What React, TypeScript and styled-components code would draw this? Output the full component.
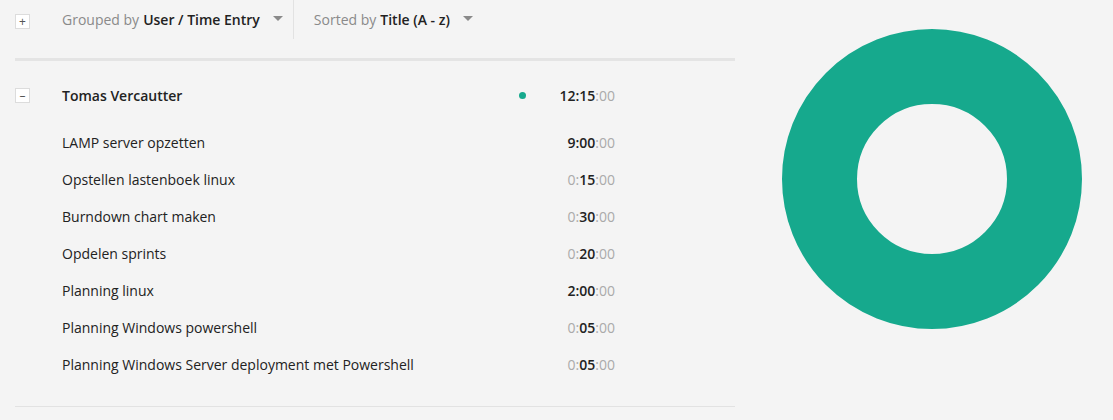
import React from "react";
import styled, { createGlobalStyle } from "styled-components";

const Global = createGlobalStyle`
  html, body { margin: 0; padding: 0; background: #f4f4f4; }
  body { font-family: "Open Sans", "Liberation Sans", sans-serif; color: #222; }
`;

const Page = styled.div`
  display: flex;
  width: 1113px;
  height: 420px;
  overflow: hidden;
  background: #f4f4f4;
`;

const Left = styled.div`
  width: 720px;
  margin-left: 15px;
  display: flex;
  flex-direction: column;
`;

const Toolbar = styled.div`
  display: flex;
  align-items: stretch;
  height: 39px;
  margin-bottom: 19px;
`;

const ToggleBox = styled.div`
  width: 13px;
  height: 13px;
  border: 1px solid #dcdcdc;
  background: #fff;
  display: flex;
  align-items: center;
  justify-content: center;
  flex: none;
  font-size: 12px;
  line-height: 1;
  color: #555;
`;

const ToolToggle = styled(ToggleBox)`
  margin-top: 14px;
`;

const Dropdown = styled.div<{ $sep?: boolean }>`
  display: flex;
  align-items: center;
  height: 39px;
  padding: 0 10px 0 ${(p) => (p.$sep ? "20px" : "32px")};
  border-left: ${(p) => (p.$sep ? "1px solid #e2e2e2" : "none")};
  font-size: 14px;
`;

const DropLabel = styled.span`
  color: #8a8a8a;
  margin-right: 4px;
  line-height: 39px;
`;

const DropValue = styled.span`
  color: #222;
  font-weight: 600;
`;

const Caret = styled.span`
  width: 0;
  height: 0;
  border-left: 5px solid transparent;
  border-right: 5px solid transparent;
  border-top: 5px solid #8a8a8a;
  margin-left: 13px;
  margin-top: -3px;
`;

const ThickRule = styled.div`
  height: 3px;
  background: #e4e4e4;
`;

const GroupHeader = styled.div`
  display: flex;
  align-items: center;
  height: 37px;
  margin-top: 16px;
  margin-bottom: 10px;
`;

const Name = styled.div`
  margin-left: 32px;
  font-size: 14px;
  font-weight: 600;
  color: #222;
  flex: 1;
`;

const Dot = styled.span`
  width: 7px;
  height: 7px;
  border-radius: 50%;
  background: #16a98d;
  margin-right: 24px;
`;

const Time = styled.div`
  width: 65px;
  text-align: right;
  font-size: 14px;
  margin-right: 120px;
`;

const Strong = styled.span`
  color: #222;
  font-weight: 600;
`;

const Faint = styled.span`
  color: #aaaaaa;
`;

const Row = styled.div`
  display: flex;
  align-items: center;
  height: 37px;
`;

const Title = styled.div`
  margin-left: 47px;
  flex: 1;
  font-size: 14px;
  color: #222;
`;

const BottomRule = styled.div`
  height: 1px;
  background: #e2e2e2;
  margin-top: 23px;
`;

const Right = styled.div`
  flex: 1;
  display: flex;
  justify-content: center;
  padding-top: 29px;
  padding-left: 16px;
`;

type Entry = { title: string; h: string; m: string };

const entries: Entry[] = [
  { title: "LAMP server opzetten", h: "9", m: "00" },
  { title: "Opstellen lastenboek linux", h: "0", m: "15" },
  { title: "Burndown chart maken", h: "0", m: "30" },
  { title: "Opdelen sprints", h: "0", m: "20" },
  { title: "Planning linux", h: "2", m: "00" },
  { title: "Planning Windows powershell", h: "0", m: "05" },
  { title: "Planning Windows Server deployment met Powershell", h: "0", m: "05" },
];

function Duration({ h, m }: { h: string; m: string }) {
  if (h === "0") {
    return (
      <>
        <Faint>0:</Faint>
        <Strong>{m}</Strong>
        <Faint>:00</Faint>
      </>
    );
  }
  return (
    <>
      <Strong>
        {h}:{m}
      </Strong>
      <Faint>:00</Faint>
    </>
  );
}

export default function App() {
  return (
    <Page>
      <Global />
      <Left>
        <Toolbar>
          <ToolToggle>+</ToolToggle>
          <Dropdown>
            <DropLabel>Grouped by</DropLabel>
            <DropValue>User / Time Entry</DropValue>
            <Caret />
          </Dropdown>
          <Dropdown $sep>
            <DropLabel>Sorted by</DropLabel>
            <DropValue>Title (A - z)</DropValue>
            <Caret />
          </Dropdown>
        </Toolbar>
        <ThickRule />
        <GroupHeader>
          <ToggleBox>–</ToggleBox>
          <Name>Tomas Vercautter</Name>
          <Dot />
          <Time>
            <Strong>12:15</Strong>
            <Faint>:00</Faint>
          </Time>
        </GroupHeader>
        {entries.map((e) => (
          <Row key={e.title}>
            <Title>{e.title}</Title>
            <Time>
              <Duration h={e.h} m={e.m} />
            </Time>
          </Row>
        ))}
        <BottomRule />
      </Left>
      <Right>
        <svg width="300" height="300" viewBox="0 0 300 300">
          <circle cx="150" cy="150" r="112.5" fill="none" stroke="#16a98d" strokeWidth="75" />
        </svg>
      </Right>
    </Page>
  );
}
